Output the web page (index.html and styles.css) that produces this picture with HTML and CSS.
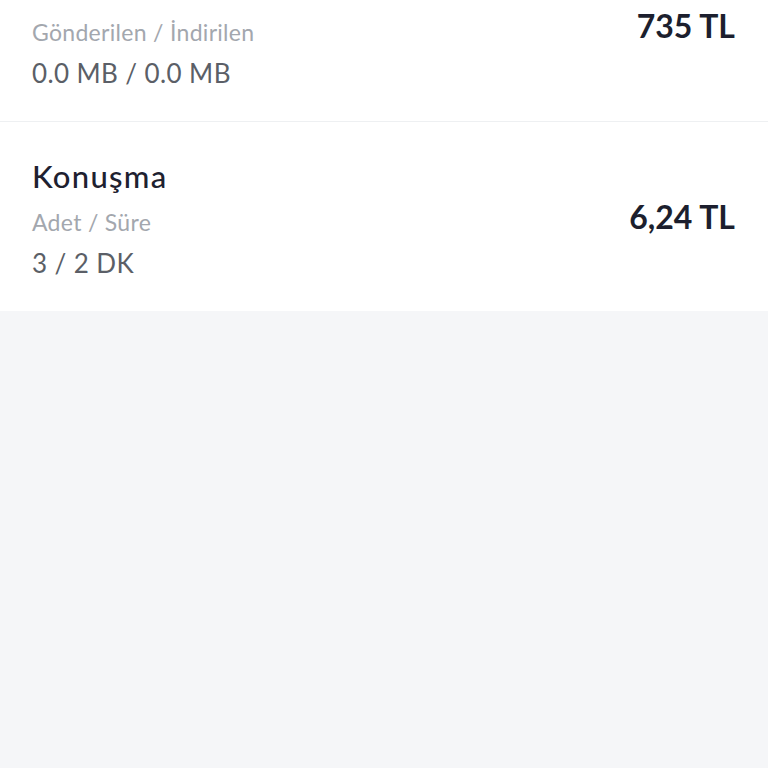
FILE: index.html
```html
<!DOCTYPE html>
<html lang="tr">
<head>
  <meta charset="UTF-8" />
  <meta name="viewport" content="width=device-width, initial-scale=1.0" />
  <title>Kullanım Detayı</title>
  <link rel="stylesheet" href="styles.css">
</head>
<body>
  <section class="usage-list">
    <!-- first row is scrolled, its title is above the fold -->
    <div class="usage-item scrolled">
      <div class="usage-info">
        <span class="usage-label">Gönderilen / İndirilen</span>
        <span class="usage-value">0.0 MB / 0.0 MB</span>
      </div>
      <div class="usage-price">735 TL</div>
    </div>

    <div class="usage-item">
      <div class="usage-info">
        <h3>Konuşma</h3>
        <span class="usage-label">Adet / Süre</span>
        <span class="usage-value">3 / 2 DK</span>
      </div>
      <div class="usage-price">6,24 TL</div>
    </div>
  </section>
</body>
</html>
```

FILE: styles.css
```css
body {
  margin: 0;
  background: #f5f6f8;
  color: #1e2130;
  font-family: Lato, 'Noto Sans', sans-serif;
  overflow: hidden;
}

.usage-list {
  background: white;
}

.usage-item {
  display: flex;
  justify-content: space-between;
  align-items: center;
  padding: 33px 33px 32px 32px;
  border-top: 1px solid #eef0f2;
}

.usage-item:first-child {
  border-top: none;
}

.usage-item.scrolled {
  padding-top: 16px;
}

.usage-item.scrolled .usage-price {
  align-self: flex-start;
  margin-top: -9px;
}

.usage-info {
  display: flex;
  flex-direction: column;
  gap: 9px;
}

.usage-info h3 {
  margin: 0;
  font-size: 31px;
  line-height: 42px;
  font-weight: 500;
  letter-spacing: 1.3px;
  color: #1e2130;
}

.usage-label {
  font-size: 23px;
  line-height: 32px;
  letter-spacing: 0.3px;
  color: #a3a7ae;
}

.usage-value {
  font-size: 26px;
  line-height: 32px;
  letter-spacing: 0.4px;
  color: #5b5f67;
}

.usage-price {
  font-size: 32px;
  line-height: 38px;
  font-weight: bold;
  color: #1c1f2e;
}
```
